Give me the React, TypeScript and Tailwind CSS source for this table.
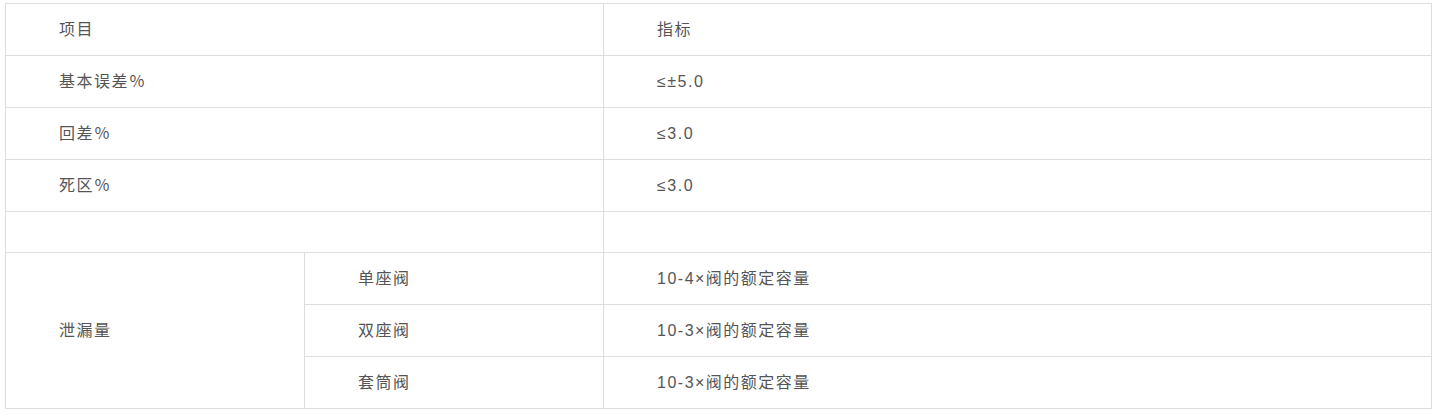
import React from "react";

const cell =
  "border-r border-b border-[#dddddd] flex items-center pl-[53px] text-[16px] tracking-[1.5px] text-[#555555]";

export default function App() {
  return (
    <div className="w-[1435px] h-[418px] bg-white pt-[3px] pl-[5px]" style={{ fontFamily: '"Liberation Sans", Arial, "Noto Sans CJK SC", sans-serif' }}>
      <div className="grid grid-cols-[299px_299px_828px] grid-rows-[52px_52px_52px_52px_41px_52px_52px_52px] border-l border-t border-[#dddddd] w-[1427px]">
        <div className={`${cell} col-span-2`}>项目</div>
        <div className={cell}>指标</div>

        <div className={`${cell} col-span-2`}>基本误差％</div>
        <div className={cell}>≤±5.0</div>

        <div className={`${cell} col-span-2`}>回差％</div>
        <div className={cell}>≤3.0</div>

        <div className={`${cell} col-span-2`}>死区％</div>
        <div className={cell}>≤3.0</div>

        <div className={`${cell} col-span-2`}></div>
        <div className={cell}></div>

        <div className={`${cell} row-span-3`}>泄漏量</div>
        <div className={cell}>单座阀</div>
        <div className={cell}>10-4×阀的额定容量</div>
        <div className={cell}>双座阀</div>
        <div className={cell}>10-3×阀的额定容量</div>
        <div className={cell}>套筒阀</div>
        <div className={cell}>10-3×阀的额定容量</div>
      </div>
    </div>
  );
}
